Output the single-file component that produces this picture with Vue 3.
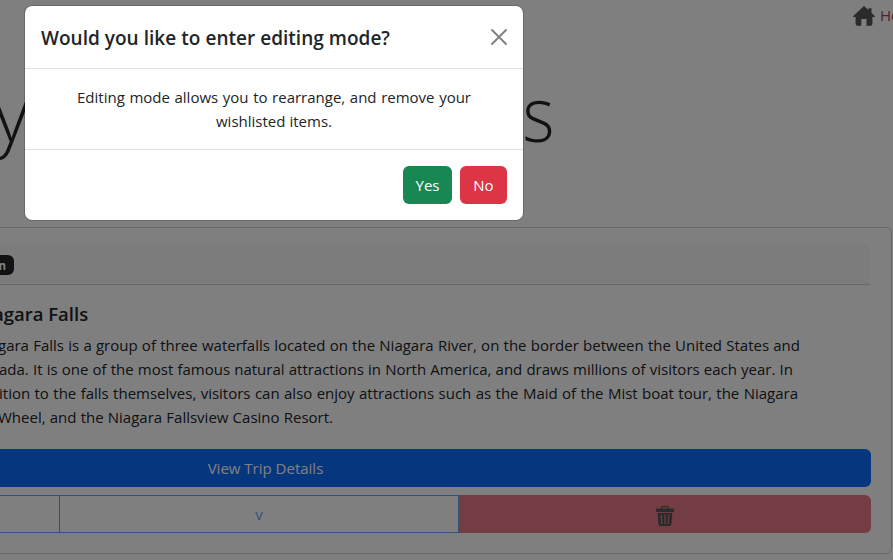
<script setup>
const lines = [
  { text: 'gara Falls is a group of three waterfalls located on the Niagara River, on the border between the United States and', key: 'a' },
  { text: 'ada. It is one of the most famous natural attractions in North America, and draws millions of visitors each year. In', key: 'b' },
  { text: 'ition to the falls themselves, visitors can also enjoy attractions such as the Maid of the Mist boat tour, the Niagara', key: 'c' },
  { text: 'Wheel, and the Niagara Fallsview Casino Resort.', key: 'd' },
]
</script>

<template>
  <div class="page">
    <nav class="nav">
      <svg class="home" viewBox="0 0 22 20"><path d="M11 0 0 10.200q.4 1.200 2.600.8V18q0 1.700 1.700 1.700h4V13h5.200v6.700h4.200q1.700 0 1.700-1.700v-7q2.200.4 2.600-.8L18.500 6.800V2.300h-3v1.800z" /></svg>
      <span class="nav-text">Home</span>
    </nav>
    <h1 class="display"><span>y</span><span class="last">s</span></h1>

    <section class="card">
      <div class="card-header"><span class="badge">n</span></div>
      <h5 class="card-title">agara Falls</h5>
      <div class="card-text">
        <div v-for="l in lines" :key="l.key" class="line" :class="'line-' + l.key">{{ l.text }}</div>
      </div>
      <button class="details"><span>View Trip Details</span></button>
      <div class="group">
        <button class="move up"></button>
        <button class="move down">v</button>
        <button class="remove">
          <svg class="trash" viewBox="0 0 18 20">
            <path d="M5.600 3V1.500Q5.600.6 6.500.6h5q.9 0 .9.9V3" fill="none" stroke="#52565a" stroke-width="1.200" />
            <rect x="0" y="2.600" width="18" height="3.500" rx=".9" />
            <path fill-rule="evenodd" d="M1.600 7h14.800l-.9 11.200q-.2 1.800-2 1.800h-9q-1.800 0-2-1.800zM4.600 8.500l.6 9.500h1.100l-.5-9.500zM8.400 8.500v9.500h1.200v-9.500zM12.200 8.500l-.5 9.500h1.100l.6-9.500z" />
          </svg>
        </button>
      </div>
    </section>

    <div class="backdrop"></div>
    <div class="modal">
      <header class="modal-header">
        <h5>Would you like to enter editing mode?</h5>
        <svg class="close" viewBox="0 0 16 16"><path d="M1 1 15 15M15 1 1 15" /></svg>
      </header>
      <div class="modal-body">
        <p class="m1">Editing mode allows you to rearrange, and remove your</p>
        <p class="m2">wishlisted items.</p>
      </div>
      <footer class="modal-footer">
        <button class="btn yes">Yes</button>
        <button class="btn no">No</button>
      </footer>
    </div>
  </div>
</template>

<style>
body { margin: 0; overflow: hidden; }
</style>

<style scoped>
* { box-sizing: border-box; }
.page {
  position: relative;
  width: 893px;
  height: 560px;
  overflow: hidden;
  background: #fff;
  color: #212529;
  font: 400 15px/24px "Open Sans", "Noto Sans", sans-serif;
}
h1, h5, p { margin: 0; }
button { font: inherit; border: 0; padding: 0; }
.nav { display: flex; height: 32px; padding-left: 853px; white-space: nowrap; }
.home { flex: none; width: 22px; height: 20px; margin-top: 6px; fill: #52565a; }
.nav-text { margin: 3px 0 0 5px; color: #964a4b; }
.display {
  display: flex;
  justify-content: space-between;
  width: 560px;
  height: 195px;
  margin-left: -6px;
  padding-top: 33px;
  font-size: 76px;
  line-height: 96px;
  font-weight: 300;
}
.last { transform: scaleX(.9); transform-origin: right; }
.card {
  width: 922px;
  height: 327px;
  margin-left: -30px;
  padding: 16px 21px 0 29px;
  border: 1px solid #ced0d2;
  border-radius: 6px;
}
.card-header {
  display: flex;
  height: 41px;
  padding-top: 11px;
  background: #f8f8f8;
  border-bottom: 1px solid #ced0d2;
  border-radius: 0 5px 0 0;
}
.badge {
  width: 34px;
  height: 20px;
  margin-left: -20px;
  padding-right: 8px;
  border-radius: 6px;
  background: #212529;
  color: #fff;
  font-size: 11.500px;
  line-height: 21px;
  font-weight: 700;
  text-align: right;
}
.card-title {
  height: 48px;
  padding-top: 17px;
  margin-left: -7px;
  font-size: 18.500px;
  line-height: 24px;
  font-weight: 600;
}
.card-text { height: 116px; }
.line { height: 24px; white-space: nowrap; text-align-last: justify; }
.line-a { width: 802px; margin-left: -2px; }
.line-b { width: 794px; margin-left: -1px; }
.line-c { width: 799px; margin-left: -1px; }
.line-d { width: 335px; margin-left: -2px; }
.details {
  display: block;
  width: 901px;
  height: 38px;
  margin-left: -30px;
  padding-right: 310px;
  border-radius: 6px;
  background: #0d6efd;
  color: #fff;
}
.group { display: flex; width: 901px; margin: 8px 0 0 -30px; height: 38px; }
.move { border: 1px solid #0d6efd; background: #fff; color: #0d6efd; opacity: .65; }
.up { width: 90px; }
.down { width: 399px; border-left: 0; }
.remove {
  display: flex;
  flex: 1;
  align-items: center;
  justify-content: center;
  background: #e87a86;
  border-radius: 0 6px 6px 0;
}
.trash { width: 18px; height: 20px; margin-top: 4px; fill: #52565a; }
.backdrop { position: absolute; inset: 0; background: rgba(0, 0, 0, .5); }
.modal {
  position: absolute;
  left: 24px;
  top: 5px;
  width: 500px;
  height: 216px;
  border: 1px solid rgba(0, 0, 0, .18);
  border-radius: 8px;
  background: #fff;
  background-clip: padding-box;
}
.modal-header {
  display: flex;
  justify-content: space-between;
  height: 63px;
  padding: 16px;
  border-bottom: 1px solid #dee2e6;
}
.modal-header h5 { width: 349px; font-size: 19px; line-height: 33px; font-weight: 600; white-space: nowrap; text-align-last: justify; }
.close { width: 16px; height: 16px; margin: 7px 0 0; overflow: visible; stroke: #808080; stroke-width: 1.900; stroke-linecap: round; }
.modal-body { height: 81px; padding-top: 16px; border-bottom: 1px solid #dee2e6; }
.modal-body p { margin: 0 auto; white-space: nowrap; text-align-last: justify; }
.m1 { width: 394px; }
.m2 { width: 116px; }
.modal-footer { display: flex; justify-content: flex-end; gap: 8px; padding: 16px; }
.btn { height: 38px; border-radius: 6px; color: #fff; }
.yes { width: 49px; background: #198754; }
.no { width: 47px; background: #dc3545; }
</style>
